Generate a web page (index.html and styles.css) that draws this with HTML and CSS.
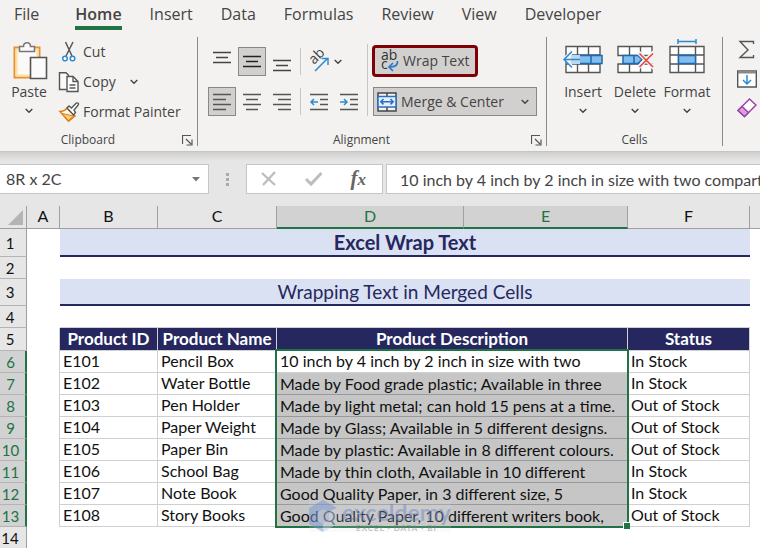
FILE: index.html
```html
<!DOCTYPE html>
<html lang="en">
<head>
<meta charset="utf-8">
<title>Excel Wrap Text</title>
<link rel="stylesheet" href="styles.css">
</head>
<body>
<svg class="defs" aria-hidden="true">
  <symbol id="chevron" viewBox="0 0 8 6"><path d="M.7 1 4 4.3 7.300 1" fill="none" stroke="#444" stroke-width="1.4"/></symbol>
  <symbol id="launcher" viewBox="0 0 11 11"><path d="M.5 9V.5H9M4 4l5 5M10 4.500V10H4.500" fill="none" stroke="#555" stroke-width="1.200"/></symbol>
</svg>

<nav class="tabs">
  <a class="tab file" href="#">File</a>
  <a class="tab active" href="#">Home</a>
  <a class="tab" href="#">Insert</a>
  <a class="tab" href="#">Data</a>
  <a class="tab" href="#">Formulas</a>
  <a class="tab" href="#">Review</a>
  <a class="tab" href="#">View</a>
  <a class="tab" href="#">Developer</a>
</nav>

<div class="ribbon">
  <section class="group clipboard">
    <div class="tools">
      <button class="big">
        <svg width="36" height="40" viewBox="-1 -1 36 40">
          <path d="M2.500 6.500h25v30h-25z" fill="#fbfaf8" stroke="#e8912d" stroke-width="2"/>
          <path d="M4.500 8.500h21v26h-21z" fill="none" stroke="#fbe0a4" stroke-width="2"/>
          <path d="M7.500 10.500v-5h4c0-5 7-5 7 0h4v5z" fill="#fafafa" stroke="#777" stroke-width="1.500"/>
          <path d="M18.500 16.500h16v21h-16z" fill="#fbfbfb" stroke="#555" stroke-width="1.600"/>
        </svg>
        <span>Paste</span>
        <svg class="chev"><use href="#chevron"/></svg>
      </button>
      <div class="stack">
        <button class="row">
          <svg width="20" height="20" viewBox="0 0 20 20">
            <path d="M6.500 0 13 14M14 0 7 14" stroke="#555" stroke-width="1.500" fill="none"/>
            <circle cx="6" cy="16.500" r="2.300" fill="#fff" stroke="#2b8ad2" stroke-width="1.500"/>
            <circle cx="13.500" cy="16.500" r="2.300" fill="#fff" stroke="#2b8ad2" stroke-width="1.500"/>
          </svg>
          <span>Cut</span>
        </button>
        <button class="row">
          <svg width="20" height="20" viewBox="0 0 20 20">
            <path d="M7.500 17.500h-7V.7H7l3 3" fill="#fafafa" stroke="#555" stroke-width="1.400"/>
            <path d="M8 4.500h6l5 5v10H8z" fill="#fff" stroke="#555" stroke-width="1.400"/>
            <path d="M14 4.500v5h5M10.500 13h6M10.500 16h6" fill="none" stroke="#555" stroke-width="1.300"/>
          </svg>
          <span>Copy</span>
          <svg class="chev"><use href="#chevron"/></svg>
        </button>
        <button class="row">
          <svg width="20" height="20" viewBox="0 0 20 20">
            <path d="M1 9.500c3 0 5-1 7-3.500l8 8-6.500 5.300z" fill="#fff7e8" stroke="#e07b12" stroke-width="1.500"/>
            <path d="M3 11.500 14.500 14 9.500 18.500z" fill="#f9cd82" stroke="#e07b12"/>
            <path d="m8 6 2-2 2.500 2L17 1.200c2-1 3.300.5 2 2L15 8l1.500 2.500-2 2.500z" fill="#fff" stroke="#555" stroke-width="1.400"/>
          </svg>
          <span>Format Painter</span>
        </button>
      </div>
    </div>
    <footer class="caption"><span>Clipboard</span><button class="launch" aria-label="Clipboard settings"><svg width="11" height="11"><use href="#launcher"/></svg></button></footer>
  </section>

  <section class="group alignment">
    <div class="tools">
      <div class="icon-rows">
        <div class="icon-row">
          <button class="sq" aria-label="Top Align"><svg width="18" height="22"><path d="M0 1.500h18M3 6.500h12M0 11.500h18" stroke="#444" stroke-width="1.400"/></svg></button>
          <button class="sq on" aria-label="Middle Align"><svg width="18" height="22"><path d="M0 5.500h18M3 10.500h12M0 15.500h18" stroke="#222" stroke-width="1.400"/></svg></button>
          <button class="sq" aria-label="Bottom Align"><svg width="18" height="22"><path d="M0 9.500h18M3 14.500h12M0 19.500h18" stroke="#444" stroke-width="1.400"/></svg></button>
          <i class="bar"></i>
          <button class="sq wide" aria-label="Orientation">
            <svg width="22" height="22" viewBox="0 0 22 22"><text class="ab" transform="translate(6 14) rotate(-45)">ab</text><path d="M7 20 19 8M13.500 7.500H20V14" fill="none" stroke="#2b8ad2" stroke-width="1.500"/></svg>
            <svg class="chev"><use href="#chevron"/></svg>
          </button>
        </div>
        <div class="icon-row">
          <button class="sq on" aria-label="Align Left"><svg width="18" height="18"><path d="M0 1.500h18M0 6.500h13M0 11.500h18M0 16.500h13" stroke="#555" stroke-width="1.500"/></svg></button>
          <button class="sq" aria-label="Center"><svg width="18" height="18"><path d="M0 1.500h18M3 6.500h12M0 11.500h18M3 16.500h12" stroke="#555" stroke-width="1.500"/></svg></button>
          <button class="sq" aria-label="Align Right"><svg width="18" height="18"><path d="M0 1.500h18M5 6.500h13M0 11.500h18M5 16.500h13" stroke="#555" stroke-width="1.500"/></svg></button>
          <i class="bar"></i>
          <button class="sq" aria-label="Decrease Indent"><svg width="18" height="18"><path d="M0 1.500h18M10 6.500h8M10 11.500h8M0 16.500h18" stroke="#555" stroke-width="1.500"/><path d="M8 9H1M4 6 1 9l3 3" fill="none" stroke="#2b8ad2" stroke-width="1.500"/></svg></button>
          <button class="sq" aria-label="Increase Indent"><svg width="18" height="18"><path d="M0 1.500h18M10 6.500h8M10 11.500h8M0 16.500h18" stroke="#555" stroke-width="1.500"/><path d="M0 9h7M4 6l3 3-3 3" fill="none" stroke="#2b8ad2" stroke-width="1.500"/></svg></button>
        </div>
      </div>
      <div class="text-rows">
        <button class="wrap">
          <svg width="18" height="22" viewBox="0 0 18 22"><text class="abc" x="0" y="10">ab</text><text class="abc" x="0" y="19">c</text><path d="M16.500 11c.5 4-2 6-8 6M12 13l-4 4 4 4" fill="none" stroke="#2b78c8" stroke-width="1.700"/></svg>
          <span>Wrap Text</span>
        </button>
        <button class="merge">
          <svg width="20" height="20" viewBox="0 0 20 20"><path d="M1 1h18v18H1zM10 1v4M10 15v4" fill="#f3f3f3" stroke="#444" stroke-width="1.500"/><path d="M1 4.500h18v10.500H1z" fill="#e6f0fb" stroke="#2b6fc4" stroke-width="1.500"/><path d="M4 9.700h12M6.500 7 3.800 9.700l2.700 2.700M13.500 7l2.700 2.700-2.700 2.700" fill="none" stroke="#2b6fc4" stroke-width="1.500"/></svg>
          <span>Merge &amp; Center</span>
          <svg class="chev"><use href="#chevron"/></svg>
        </button>
      </div>
    </div>
    <footer class="caption"><span>Alignment</span><button class="launch" aria-label="Alignment settings"><svg width="11" height="11"><use href="#launcher"/></svg></button></footer>
  </section>

  <section class="group cells">
    <div class="tools">
      <button class="big">
        <svg width="40" height="40" viewBox="0 0 40 40">
          <path d="M3 6.500h34v26H3zM3 15h34M3 24h34M14.500 6.500v26M25.500 6.500v26" fill="#fff" stroke="#555" stroke-width="1.400"/>
          <path d="M14 15.500h25v8H14z" fill="#83beec"/><path d="M14 15.500h25v8H14M28 15.500v8" fill="none" stroke="#1b6ab3" stroke-width="1.500"/>
          <path d="M9 9-1 19l10 9z" fill="#f3f2f1"/><path d="M8 15h9v9H8z" fill="#b9d9f2"/>
          <path d="M17 19.500H1M9 11.500l-8 8 8 8" fill="none" stroke="#2b8ad2" stroke-width="1.500"/>
        </svg>
        <span>Insert</span>
        <svg class="chev"><use href="#chevron"/></svg>
      </button>
      <button class="big">
        <svg width="40" height="40" viewBox="0 0 40 40">
          <path d="M3 6.500h34v9H3zM3 24h34v8.500H3zM14.500 6.500v9M25.500 6.500v9M14.500 24v8.500M25.500 24v8.500" fill="#fff" stroke="#555" stroke-width="1.400"/>
          <path d="M8 15.500h15l4 4-4 4H8z" fill="#83beec" stroke="#1b6ab3" stroke-width="1.500"/><path d="M19 15.500v8" stroke="#1b6ab3" stroke-width="1.500"/>
          <path d="m23 12 16 16M39 12 23 28" stroke="#f3f2f1" stroke-width="4"/><path d="m24.500 13.500 13.500 13.500M38 13.500 24.500 27" stroke="#e8403c" stroke-width="1.500"/>
        </svg>
        <span>Delete</span>
        <svg class="chev"><use href="#chevron"/></svg>
      </button>
      <button class="big">
        <svg width="40" height="40" viewBox="0 0 40 40">
          <path d="M3 6.500h34v26H3zM3 15h34M3 24h34M11.500 6.500v26M28.500 6.500v26" fill="#fff" stroke="#555" stroke-width="1.400"/>
          <path d="M11.500 15.500h17v8h-17z" fill="#83beec" stroke="#1b6ab3" stroke-width="1.500"/>
          <path d="M11 1.500h18M11 -1v5M29 -1v5" stroke="#2b8ad2" stroke-width="1.500"/>
        </svg>
        <span>Format</span>
        <svg class="chev"><use href="#chevron"/></svg>
      </button>
    </div>
    <footer class="caption"><span>Cells</span></footer>
  </section>

  <section class="group editing">
    <button class="edit" aria-label="AutoSum"><svg width="20" height="20" viewBox="0 0 20 20"><path d="M16.500 4V1.500H3l8 8.500-8 7.500h13.500V15" fill="none" stroke="#555" stroke-width="1.400"/></svg></button>
    <button class="edit" aria-label="Fill"><svg width="20" height="20" viewBox="0 0 20 20"><path d="M.7 2h18.600v16H.7z" fill="#fff" stroke="#555" stroke-width="1.400"/><path d="M1 3h18" stroke="#888" stroke-width="3"/><path d="M10 6v9M6 11l4 4 4-4" fill="none" stroke="#2b8ad2" stroke-width="1.500"/></svg></button>
    <button class="edit" aria-label="Clear"><svg width="20" height="20" viewBox="0 0 20 20"><path d="M1 12.500 12.500 1 19 7 7.500 18.500z" fill="#fff" stroke="#9a3fa8" stroke-width="1.400"/><path d="M1 12.500 5 8.500l6.500 6-4 4z" fill="#d5a3d8" stroke="#9a3fa8" stroke-width="1.400"/></svg></button>
  </section>
</div>

<div class="formula-bar">
  <div class="name-box">
    <input type="text" aria-label="Name Box" value="8R x 2C">
    <button aria-label="Names"><svg width="8" height="5"><path d="M0 0h8L4 4.500z" fill="#777"/></svg></button>
  </div>
  <div class="grip"><i></i><i></i><i></i></div>
  <div class="fx-buttons">
    <button aria-label="Cancel"><svg width="16" height="16"><path d="m1 2 13 12M14 1 2 14" stroke="#bdbdbd" stroke-width="2.300"/></svg></button>
    <button aria-label="Enter"><svg width="18" height="16"><path d="m1 8 5 5L16.500 2" fill="none" stroke="#bdbdbd" stroke-width="3"/></svg></button>
    <button class="fx" aria-label="Insert Function">f<small>x</small></button>
  </div>
  <input class="formula" type="text" aria-label="Formula" value="10 inch by 4 inch by 2 inch in size with two compartments">
</div>

<table class="sheet">
  <colgroup><col class="c-num"><col class="c-a"><col class="c-b"><col class="c-c"><col class="c-d"><col class="c-e"><col class="c-f"><col></colgroup>
  <thead>
    <tr><th class="corner"><svg width="15" height="15"><path d="M15 0v15H0z" fill="#b4b4b4"/></svg></th><th>A</th><th>B</th><th>C</th><th class="sel">D</th><th class="sel">E</th><th>F</th><th></th></tr>
  </thead>
  <tbody>
    <tr class="r-title"><th>1</th><td></td><td class="title bold" colspan="6"><span>Excel Wrap Text</span></td></tr>
    <tr><th>2</th><td colspan="7"></td></tr>
    <tr class="r-sub"><th>3</th><td></td><td class="title" colspan="6"><span>Wrapping Text in Merged Cells</span></td></tr>
    <tr><th>4</th><td></td><td class="edge" colspan="5"></td><td></td></tr>
    <tr class="r-head"><th>5</th><td class="lead"></td><td class="h">Product ID</td><td class="h">Product Name</td><td class="h" colspan="2">Product Description</td><td class="h">Status</td><td></td></tr>
    <tr class="d"><th>6</th><td class="lead"></td><td>E101</td><td>Pencil Box</td><td class="first" colspan="2">10 inch by 4 inch by 2 inch in size with two<div class="selection"></div></td><td>In Stock</td><td></td></tr>
    <tr class="d"><th>7</th><td class="lead"></td><td>E102</td><td>Water Bottle</td><td class="desc" colspan="2">Made by Food grade plastic; Available in three</td><td>In Stock</td><td></td></tr>
    <tr class="d"><th>8</th><td class="lead"></td><td>E103</td><td>Pen Holder</td><td class="desc" colspan="2">Made by light metal; can hold 15 pens at a time.</td><td>Out of Stock</td><td></td></tr>
    <tr class="d"><th>9</th><td class="lead"></td><td>E104</td><td>Paper Weight</td><td class="desc" colspan="2">Made by Glass; Available in 5 different designs.</td><td>Out of Stock</td><td></td></tr>
    <tr class="d"><th>10</th><td class="lead"></td><td>E105</td><td>Paper Bin</td><td class="desc" colspan="2">Made by plastic: Available in 8 different colours.</td><td>Out of Stock</td><td></td></tr>
    <tr class="d"><th>11</th><td class="lead"></td><td>E106</td><td>School Bag</td><td class="desc" colspan="2">Made by thin cloth, Available in 10 different</td><td>In Stock</td><td></td></tr>
    <tr class="d"><th>12</th><td class="lead"></td><td>E107</td><td>Note Book</td><td class="desc" colspan="2">Good Quality Paper, in 3 different size, 5</td><td>In Stock</td><td></td></tr>
    <tr class="d"><th>13</th><td class="lead"></td><td>E108</td><td>Story Books</td><td class="desc" colspan="2">Good Quality Paper, 10 different writers book,
      <div class="watermark">
        <svg width="28" height="32" viewBox="0 0 28 32"><path d="M14 0 28 8v16l-14 8L0 24V8z" fill="#a9bbdc"/><path d="m14 0 14 8-9 4-5-3-6 4v7l6 4v8L0 24V8z" fill="#7f9bd4"/><path d="m14 24 6-4v-8l8-4v16l-14 8z" fill="#c9d3e0"/></svg>
        <div><b>exceldemy</b><small>EXCEL · DATA · BI</small></div>
      </div></td><td>Out of Stock</td><td></td></tr>
    <tr><th>14</th><td colspan="7"></td></tr>
  </tbody>
</table>
</body>
</html>
```
FILE: styles.css
```css
* { box-sizing: border-box; }
body {
  margin: 0;
  min-height: 100vh;
  overflow: hidden;
  background: #fff;
  color: #444;
  font: 14px/20px "Open Sans", "Noto Sans", sans-serif;
}
button, input { font: inherit; color: inherit; background: none; border: 0; padding: 0; margin: 0; min-width: 0; }
svg { display: block; flex: none; overflow: visible; }
.defs { position: absolute; width: 0; height: 0; }
.chev { width: 8px; height: 6px; }

.tabs { display: flex; gap: 28px; padding: 2px 14px 0; background: #f3f2f1; font-size: 16px; line-height: 24px; }
.tab { color: #444; text-decoration: none; height: 32px; }
.file { margin-right: 8px; }
.active { height: 28px; font-weight: 600; border-bottom: 4px solid #217346; }

.ribbon { display: flex; background: #f3f2f1; border-bottom: 1px solid #c8c6c4; padding: 3px 0 5px; overflow: hidden; }
.group { display: flex; flex-direction: column; flex: none; border-right: 1px solid #8a8886; }
.tools { display: flex; flex: 1; }
.caption { display: flex; align-items: center; height: 12px; padding-right: 4px; font-size: 12px; line-height: 12px; }
.caption span { flex: 1; text-align: center; }
.launch { margin-left: 6px; }
.big { display: flex; flex-direction: column; align-items: center; gap: 2px; padding-top: 3px; line-height: 20px; }
.big .chev { margin-top: 4px; }

.clipboard { width: 198px; }
.clipboard .tools { padding-left: 11px; gap: 12px; }
.stack { display: flex; flex-direction: column; gap: 10px; padding-top: 5px; }
.row { display: flex; align-items: center; gap: 4px; height: 20px; white-space: nowrap; }
.row .chev { margin-left: 10px; }

.alignment { width: 349px; }
.alignment .tools { padding: 7px 9px 18px 10px; gap: 4px; }
.icon-rows { display: flex; flex-direction: column; gap: 11px; padding: 3px 4px 0 0; border-right: 1px solid #c8c6c4; }
.icon-row { display: flex; gap: 2px; height: 29px; }
.sq { display: grid; place-items: center; width: 28px; height: 29px; border: 1px solid transparent; }
.on { background: #d2d0ce; border-color: #8a8886; }
.wide { display: flex; justify-content: space-between; align-items: center; width: 38px; padding-left: 2px; }
.bar { width: 1px; margin: 1px 2px; background: #c8c6c4; }
.ab { font-size: 14px; fill: #444; }
.abc { font-size: 14px; fill: #333; }
.text-rows { display: flex; flex-direction: column; align-items: flex-start; gap: 10px; padding-top: 1px; flex: 1; }
.wrap { display: flex; align-items: center; gap: 4px; height: 32px; padding: 0 5px 0 6px; border: 3px solid #800008; border-radius: 4px; background: #d2d0ce; white-space: nowrap; }
.merge { display: flex; align-items: center; gap: 4px; height: 29px; align-self: stretch; margin-left: 1px; padding: 0 7px 0 3px; border: 1px solid #8a8886; background: #d2d0ce; white-space: nowrap; }
.merge .chev { margin-left: auto; }

.cells { width: 176px; }
.cells .tools { padding-left: 12px; gap: 4px; }
.cells .big { width: 48px; }
.cells .caption { padding: 0; }

.editing { gap: 9px; padding: 3px 0 0 14px; border: 0; }

.formula-bar { display: flex; align-items: center; height: 54px; background: linear-gradient(#cfcfcf, #e6e6e6 9px); font: 16px/20px Lato, sans-serif; }
.name-box, .fx-buttons, .formula { height: 30px; background: #fff; border: 1px solid #c6c6c6; }
.name-box { display: flex; width: 209px; flex: none; border-left: 0; padding: 0 8px 0 6px; align-items: center; }
.name-box input { flex: 1; }
.grip { display: flex; flex-direction: column; gap: 2px; margin: 0 17px; flex: none; }
.grip i { width: 3px; height: 3px; background: #aaa; }
.fx-buttons { display: flex; align-items: center; justify-content: space-between; width: 137px; flex: none; padding: 0 16px 0 14px; margin-right: 3px; }
.fx { font: italic bold 21px/24px "Liberation Serif", serif; color: #666; }
.fx small { font-size: 17px; }
.formula { flex: 1; border-right: 0; padding-left: 13px; }

.sheet { width: 100%; table-layout: fixed; border-collapse: separate; border-spacing: 0; font: 16px/20px Lato, sans-serif; color: #111; }
.c-num { width: 27px; } .c-a { width: 33px; } .c-b { width: 98px; } .c-c { width: 119px; }
.c-d { width: 187px; } .c-e { width: 164px; } .c-f { width: 122px; }
.sheet th, .sheet td { padding: 0; height: 22px; white-space: nowrap; }
.sheet th { font-weight: 400; background: #e6e6e6; border-right: 1px solid #a0a0a0; border-bottom: 1px solid #a0a0a0; }
.sheet tbody th { padding-right: 6px; border-bottom-color: #b4b4b4; font-size: 15px; }
.sheet thead th { height: 23px; padding-bottom: 2px; }
.sheet thead th:last-child { border-right: 0; }
.sheet thead .sel { background: #d2d2d2; color: #217346; border-bottom: 2px solid #217346; padding-bottom: 1px; }
.corner svg { margin: 2px 0 0 8px; }
.sheet .r-title > * { height: 28px; }
.sheet .r-sub > * { height: 27px; }
.sheet .r-head > * { height: 23px; }
.title { text-align: center; font-size: 19px; color: #27275f; }
.title span { display: block; margin-right: 10px; background: #d9e1f2; border-bottom: 2px solid #27275f; line-height: 26px; }
.r-sub .title span { line-height: 25px; }
.bold { font-weight: 700; font-size: 20px; }
.edge { border-bottom: 1px solid #d0d0d0; }
.lead { border-right: 1px solid #d0d0d0; }
.h { text-align: center; font-size: 17px; font-weight: 700; color: #fff; background: #27275f; border-right: 1px solid #d0d0d0; border-bottom: 1px solid #d0d0d0; }
.sheet .d td:not(.lead, :last-child) { padding: 0 0 1px 3px; border-right: 1px solid #d0d0d0; border-bottom: 1px solid #d0d0d0; }
.sheet .d th { background: #d2d2d2; color: #217346; border-right: 2px solid #217346; padding-right: 4px; }
.d .desc { background: #c6c6c6; position: relative; }
.sheet .d td.desc:not(.lead, :last-child) { padding: 1px 0 0 3px; border-bottom-color: #999; }
.first { position: relative; }
.selection { position: absolute; z-index: 1; left: -2px; top: -2px; right: -2px; height: 179px; border: 2px solid #217346; pointer-events: none; }
.selection::after { content: ""; position: absolute; right: -3px; bottom: -3px; width: 6px; height: 6px; background: #217346; border: solid #fff; border-width: 1px 0 0 1px; }
.watermark { position: absolute; z-index: 2; left: 32px; top: -5px; display: flex; gap: 5px; opacity: .55; color: #7f93c8; background: rgba(230, 230, 230, .3); }
.watermark b { display: block; font: 700 23px/24px Lato, sans-serif; }
.watermark small { display: block; font: 700 8px/8px Lato, sans-serif; letter-spacing: 1px; text-align: center; color: #8d9098; }
```
